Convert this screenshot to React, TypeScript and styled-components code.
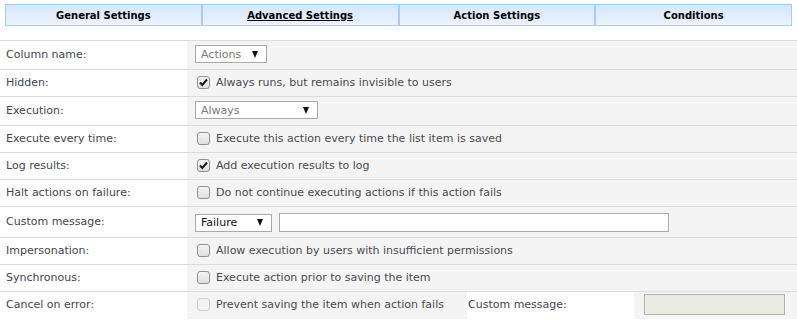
import React from "react";
import styled, { createGlobalStyle } from "styled-components";

const Global = createGlobalStyle`
  html, body { margin: 0; padding: 0; background: #fff; }
  body { font-family: "DejaVu Sans", Verdana, sans-serif; font-size: 11px; color: #444; }
`;

const Page = styled.div`
  width: 797px;
  padding-top: 4px;
`;

const Tabs = styled.div`
  display: flex;
  margin: 0 5px 0 5px;
`;

const Tab = styled.div<{ $active?: boolean }>`
  flex: 1;
  height: 20px;
  border: 1px solid #a6cdf4;
  background: linear-gradient(#d5e7fc, #eaf3fe);
  display: flex;
  align-items: center;
  justify-content: center;
  font-family: "DejaVu Sans", Tahoma, sans-serif;
  font-weight: bold;
  font-size: 10px;
  color: #000;
  text-decoration: ${(p) => (p.$active ? "underline" : "none")};
`;

const Table = styled.div`
  margin-top: 14px;
`;

const Row = styled.div`
  display: grid;
  grid-template-columns: 187px 1fr;
  border-top: 1px solid #dcdcdc;
`;

const Label = styled.div`
  background: #fff;
  display: flex;
  align-items: center;
  padding: 0 0 2px 6px;
  color: #454550;
`;

const Value = styled.div<{ $pad?: string }>`
  background: #f4f4f4;
  display: flex;
  align-items: center;
  gap: 7px;
  min-height: 26px;
  padding: ${(p) => p.$pad ?? "4px 8px 6px"};
  box-sizing: border-box;
`;

const Select = styled.div<{ $w: number; $dark?: boolean }>`
  width: ${(p) => p.$w}px;
  height: 18px;
  box-sizing: border-box;
  border: 1px solid #a9a9a9;
  background: #fff;
  display: flex;
  align-items: center;
  justify-content: space-between;
  padding: 0 8px 0 5px;
  color: ${(p) => (p.$dark ? "#111" : "#7a7a7a")};
  font-size: 11px;
`;

const Arrow = styled.span`
  width: 0;
  height: 0;
  border-left: 3.5px solid transparent;
  border-right: 3.5px solid transparent;
  border-top: 7px solid #111;
`;

const TextInput = styled.div<{ $w: number; $disabled?: boolean }>`
  width: ${(p) => p.$w}px;
  height: ${(p) => (p.$disabled ? 21 : 19)}px;
  box-sizing: border-box;
  border: 1px solid ${(p) => (p.$disabled ? "#b3b3ad" : "#a9a9a9")};
  background: ${(p) => (p.$disabled ? "#ebebe4" : "#fff")};
`;

const CheckLine = styled.label`
  display: flex;
  align-items: center;
  gap: 6px;
  padding-left: 2px;
  color: #4a4a52;
`;

const Box = styled.span<{ $disabled?: boolean }>`
  width: 13px;
  height: 13px;
  box-sizing: border-box;
  border: 1px solid ${(p) => (p.$disabled ? "#cfcfcf" : "#929292")};
  border-radius: 3px;
  background: ${(p) =>
    p.$disabled ? "#f2f2f2" : "linear-gradient(#f3f3f3, #dedede)"};
  display: flex;
  align-items: center;
  justify-content: center;
`;

const LastValue = styled.div`
  display: grid;
  grid-template-columns: 280px 167px 1fr;
`;

const GrayCell = styled.div<{ $pad: string }>`
  background: #f4f4f4;
  display: flex;
  align-items: center;
  padding: ${(p) => p.$pad};
  min-height: 25px;
  box-sizing: border-box;
`;

const WhiteCell = styled.div`
  background: #fff;
  display: flex;
  align-items: center;
  padding: 0 0 2px 1px;
  color: #454550;
`;

function Check({ checked, disabled, children }: { checked?: boolean; disabled?: boolean; children: React.ReactNode }) {
  return (
    <CheckLine>
      <Box $disabled={disabled}>
        {checked && (
          <svg width="11" height="11" viewBox="0 0 11 11">
            <path d="M2 5.5 L4.3 8 L9 2.5" fill="none" stroke="#1a1a1a" strokeWidth="2" />
          </svg>
        )}
      </Box>
      <span>{children}</span>
    </CheckLine>
  );
}

export default function App() {
  return (
    <>
      <Global />
      <Page>
        <Tabs>
          <Tab>General Settings</Tab>
          <Tab $active>Advanced Settings</Tab>
          <Tab>Action Settings</Tab>
          <Tab>Conditions</Tab>
        </Tabs>
        <Table>
          <Row>
            <Label>Column name:</Label>
            <Value>
              <Select $w={72}>Actions<Arrow /></Select>
            </Value>
          </Row>
          <Row>
            <Label>Hidden:</Label>
            <Value>
              <Check checked>Always runs, but remains invisible to users</Check>
            </Value>
          </Row>
          <Row>
            <Label>Execution:</Label>
            <Value>
              <Select $w={123}>Always<Arrow /></Select>
            </Value>
          </Row>
          <Row>
            <Label>Execute every time:</Label>
            <Value>
              <Check>Execute this action every time the list item is saved</Check>
            </Value>
          </Row>
          <Row>
            <Label>Log results:</Label>
            <Value>
              <Check checked>Add execution results to log</Check>
            </Value>
          </Row>
          <Row>
            <Label>Halt actions on failure:</Label>
            <Value>
              <Check>Do not continue executing actions if this action fails</Check>
            </Value>
          </Row>
          <Row>
            <Label>Custom message:</Label>
            <Value $pad="6px 8px 5px">
              <Select $w={77} $dark>Failure<Arrow /></Select>
              <TextInput $w={390} />
            </Value>
          </Row>
          <Row>
            <Label>Impersonation:</Label>
            <Value>
              <Check>Allow execution by users with insufficient permissions</Check>
            </Value>
          </Row>
          <Row>
            <Label>Synchronous:</Label>
            <Value>
              <Check>Execute action prior to saving the item</Check>
            </Value>
          </Row>
          <Row>
            <Label>Cancel on error:</Label>
            <LastValue>
              <GrayCell $pad="2px 8px 4px">
                <Check disabled>Prevent saving the item when action fails</Check>
              </GrayCell>
              <WhiteCell>Custom message:</WhiteCell>
              <GrayCell $pad="2px 10px 4px">
                <TextInput $w={141} $disabled />
              </GrayCell>
            </LastValue>
          </Row>
        </Table>
      </Page>
    </>
  );
}
